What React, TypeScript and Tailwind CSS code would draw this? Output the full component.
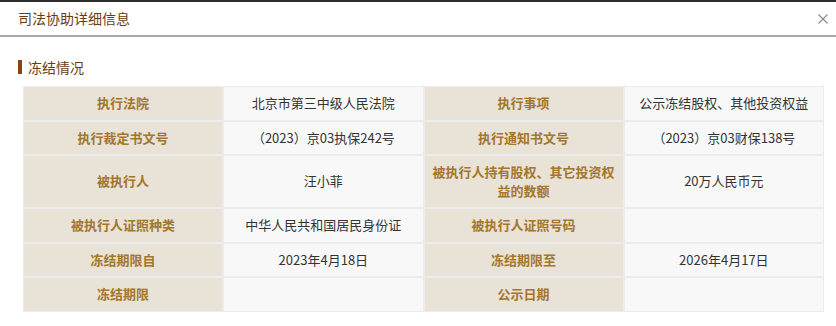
import React from "react";

const rows: [string, string, string, string][] = [
  ["执行法院", "北京市第三中级人民法院", "执行事项", "公示冻结股权、其他投资权益"],
  ["执行裁定书文号", "（2023）京03执保242号", "执行通知书文号", "（2023）京03财保138号"],
  ["被执行人", "汪小菲", "被执行人持有股权、其它投资权益的数额", "20万人民币元"],
  ["被执行人证照种类", "中华人民共和国居民身份证", "被执行人证照号码", ""],
  ["冻结期限自", "2023年4月18日", "冻结期限至", "2026年4月17日"],
  ["冻结期限", "", "公示日期", ""],
];

export default function App() {
  const font = { fontFamily: '"Microsoft YaHei", "Noto Sans CJK SC", "Noto Sans", sans-serif' };
  return (
    <div className="w-[836px] h-[326px] bg-white overflow-hidden" style={font}>
      <div className="h-[2px] bg-[#2e2e2e]" />
      <div className="h-[35px] flex items-center justify-between pl-[18px] pr-[4px] border-b-2 border-[#a8a8a8]">
        <span className="text-[14px] text-[#6b3c12]">司法协助详细信息</span>
        <svg width="12" height="12" viewBox="0 0 12 12" className="mr-[3px]">
          <path d="M1.5 1.5 L10.5 10.5 M10.5 1.5 L1.5 10.5" stroke="#8a8a8a" strokeWidth="1.1" fill="none" />
        </svg>
      </div>
      <div className="pl-[18px] pt-[22px] flex items-center h-[38px]">
        <span className="w-[4px] h-[14px] bg-[#8b4513] mr-[6px]" />
        <span className="text-[14px] text-[#6b3c12] leading-[20px]">冻结情况</span>
      </div>
      <div className="pl-[23px] pt-[11px]">
        <table className="border-separate border-spacing-0 w-[801px] table-fixed">
          <tbody>
            {rows.map((r, i) => (
              <tr key={i}>
                {r.map((c, j) => (
                  <td
                    key={j}
                    className={
                      "border border-[#ececec] text-center text-[13px] leading-[18.5px] px-[6px] py-[7px] " +
                      (j % 2 === 0
                        ? "bg-[#e9e2d7] text-[#a3762b] font-bold"
                        : "bg-[#f8f8f8] text-[#333333]")
                    }
                  >
                    {c}
                  </td>
                ))}
              </tr>
            ))}
          </tbody>
        </table>
      </div>
    </div>
  );
}
